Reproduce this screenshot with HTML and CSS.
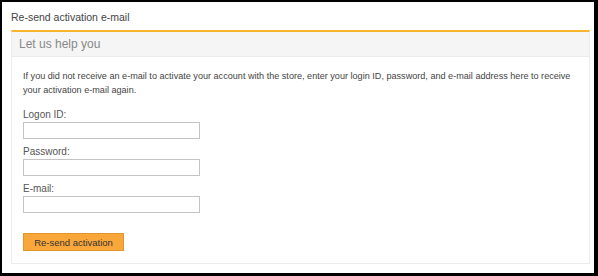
FILE: index.html
```html
<!DOCTYPE html>
<html lang="en">
<head>
    <meta charset="UTF-8">
    <meta name="viewport" content="width=device-width, initial-scale=1.0">
    <title>Re-send activation e-mail</title>
    <link rel="stylesheet" href="styles.css">
</head>
<body>
    <div class="frame">
        <h1 class="page-title">Re-send activation e-mail</h1>

        <div class="panel">
            <div class="panel-header">Let us help you</div>

            <div class="panel-body">
                <p class="intro">If you did not receive an e-mail to activate your account with the store, enter your login ID, password, and e-mail address here to receive your activation e-mail again.</p>

                <div class="field">
                    <label for="logonId">Logon ID:</label>
                    <input type="text" id="logonId">
                </div>

                <div class="field">
                    <label for="password">Password:</label>
                    <input type="password" id="password">
                </div>

                <div class="field">
                    <label for="email">E-mail:</label>
                    <input type="text" id="email">
                </div>

                <button class="send-btn">Re-send activation</button>
            </div>
        </div>
    </div>
</body>
</html>
```

FILE: styles.css
```css
* {
    margin: 0;
    padding: 0;
    box-sizing: border-box;
}

body {
    font-family: 'Liberation Sans', Arial, sans-serif;
    background: #000;
    height: 276px;
    overflow: hidden;
}

.frame {
    background: #fff;
    margin: 2px 4px 0 2px;
    height: 271px;
    padding: 9px 4px 0 9px;
}

.page-title {
    font-size: 10.5px;
    font-weight: normal;
    color: #444;
    line-height: 13px;
    margin-bottom: 6px;
}

.panel {
    border-top: 2px solid #f7b52c;
    border-left: 1px solid #ececec;
    border-right: 1px solid #ececec;
    border-bottom: 1px solid #ececec;
    height: 234px;
}

.panel-header {
    background: #f5f5f5;
    border-bottom: 1px solid #ebebeb;
    height: 25px;
    line-height: 24px;
    padding-left: 7px;
    font-size: 12px;
    color: #888;
}

.panel-body {
    padding: 12px 11px 0 11px;
}

.intro {
    font-size: 9.1px;
    line-height: 14px;
    color: #444;
    margin-bottom: 11px;
}

.field {
    margin-bottom: 6px;
}

label {
    display: block;
    font-size: 10px;
    color: #555;
    line-height: 13px;
    margin-bottom: 1px;
}

input {
    display: block;
    width: 177px;
    height: 17px;
    border: 1px solid #c4c4c4;
    background: #fff;
    font-size: 10px;
}

.send-btn {
    display: block;
    margin-top: 20px;
    width: 101px;
    height: 18px;
    background: #f9a73a;
    border: 1px solid #e2952d;
    font-family: inherit;
    font-size: 9.5px;
    color: #333;
    cursor: pointer;
}
```
